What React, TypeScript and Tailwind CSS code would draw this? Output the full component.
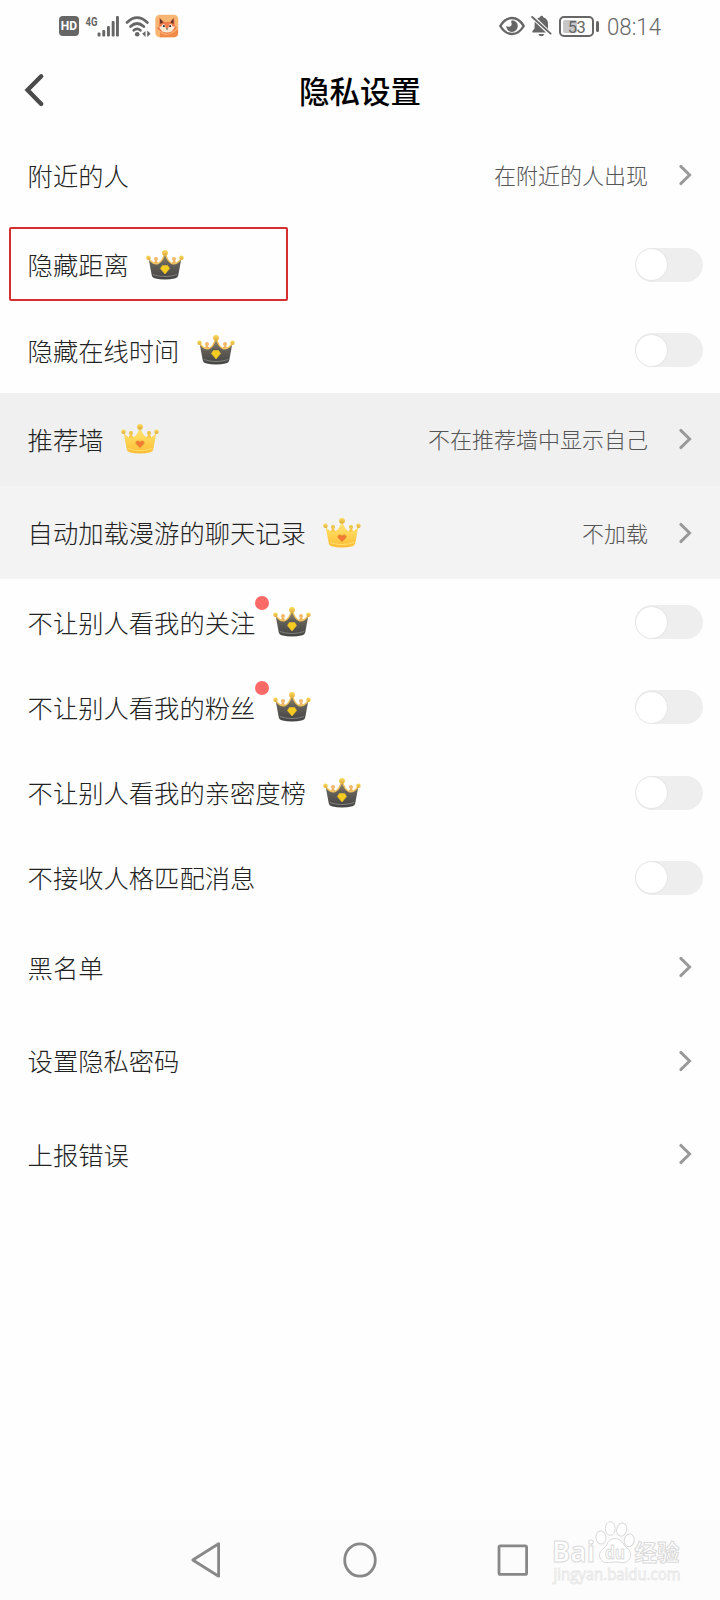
import { useId, useState } from "react";
import clsx from "clsx";

type CrownKind = "dark" | "gold";

interface RowData {
	label: string;
	kind: "toggle" | "link";
	value?: string;
	crown?: CrownKind;
	dot?: boolean;
	marked?: boolean;
	background?: string;
}

const rows: RowData[] = [
	{ label: "附近的人", kind: "link", value: "在附近的人出现" },
	{ label: "隐藏距离", kind: "toggle", crown: "dark", marked: true },
	{ label: "隐藏在线时间", kind: "toggle", crown: "dark" },
	{ label: "推荐墙", kind: "link", value: "不在推荐墙中显示自己", crown: "gold", background: "bg-[#f0f0f0]" },
	{ label: "自动加载漫游的聊天记录", kind: "link", value: "不加载", crown: "gold", background: "bg-[#f3f3f3]" },
	{ label: "不让别人看我的关注", kind: "toggle", crown: "dark", dot: true },
	{ label: "不让别人看我的粉丝", kind: "toggle", crown: "dark", dot: true },
	{ label: "不让别人看我的亲密度榜", kind: "toggle", crown: "dark" },
	{ label: "不接收人格匹配消息", kind: "toggle" },
	{ label: "黑名单", kind: "link" },
	{ label: "设置隐私密码", kind: "link" },
	{ label: "上报错误", kind: "link" },
];

function Crown({ kind }: { kind: CrownKind }) {
	const id = useId();
	const dark = kind === "dark";

	return (
		<svg width="38" height="32" viewBox="0 0 38 32" className="shrink-0">
			<defs>
				<linearGradient id={id + "body"} x1="0" y1="0" x2="0" y2="1">
					<stop offset="0" stopColor={dark ? "#a8946a" : "#ffe27a"} />
					<stop offset="0.4" stopColor={dark ? "#66625b" : "#ffd95c"} />
					<stop offset="1" stopColor={dark ? "#444444" : "#fdbc33"} />
				</linearGradient>
				<linearGradient id={id + "gold"} x1="0" y1="0" x2="0" y2="1">
					<stop offset="0" stopColor="#fbdc5c" />
					<stop offset="1" stopColor="#dfac38" />
				</linearGradient>
			</defs>
			{/* back points */}
			<path
				d="M6 19 L9.5 10 L15 18 Z M32 19 L28.5 10 L23 18 Z"
				fill={dark ? "#f0b468" : "#f9c84a"}
			/>
			<circle cx="10" cy="10" r="2" fill={dark ? "#f3b969" : "#edc548"} />
			<circle cx="28" cy="10" r="2" fill={dark ? "#f3b969" : "#edc548"} />
			<path
				d="M2.6 9.5 Q7 15.6 11.5 14.8 Q16.5 13 19 3.5 Q21.5 13 26.5 14.8 Q31 15.6 35.4 9.5 L32.2 26.5 Q31.8 28.6 29.5 29.2 Q19 32 8.5 29.2 Q6.2 28.6 5.8 26.5 Z"
				fill={`url(#${id}body)`}
			/>
			{dark && (
				<path
					d="M2.6 9.5 Q7 15.6 11.5 14.8 Q16.5 13 19 3.5 Q21.5 13 26.5 14.8 Q31 15.6 35.4 9.5"
					fill="none"
					stroke="#efc45c"
					strokeWidth="1.3"
				/>
			)}
			<path
				d="M6.8 25.5 Q19 29.6 31.2 25.5"
				fill="none"
				stroke={dark ? "#808080" : "#ffdf72"}
				strokeWidth="1"
			/>
			<circle cx="19" cy="3.8" r="2.9" fill={`url(#${id}gold)`} />
			<circle cx="2.5" cy="8.8" r="2.2" fill={`url(#${id}gold)`} />
			<circle cx="35.5" cy="8.8" r="2.2" fill={`url(#${id}gold)`} />
			{dark ? (
				<path d="M16.4 16.5 H21.6 L23.6 19.6 L19 25 L14.4 19.6 Z" fill="#f8cb20" stroke="#f8cb20" strokeWidth="0.5" strokeLinejoin="round" />
			) : (
				<path
					d="M19 25 L15 21 Q13.8 18.7 16.2 17.8 Q18 17.4 19 18.7 Q20 17.4 21.8 17.8 Q24.2 18.7 23 21 Z"
					fill="#f17a35"
					stroke="#e3ad34"
					strokeWidth="0.6"
				/>
			)}
		</svg>
	);
}

function Chevron() {
	return (
		<svg width="14" height="22" viewBox="0 0 14 22" className="shrink-0">
			<path d="M2.8 2.4 L11.6 11 L2.8 19.6" fill="none" stroke="#999" strokeWidth="2.9" strokeLinecap="round" />
		</svg>
	);
}

function Toggle() {
	const [on, setOn] = useState(false);

	return (
		<button
			role="switch"
			aria-checked={on}
			onClick={() => setOn(!on)}
			className={clsx(
				"flex h-[34px] w-[68px] shrink-0 items-center rounded-full p-[1.5px]",
				on ? "justify-end bg-amber-300" : "justify-start bg-[#eeeeee]",
			)}
		>
			<span className="size-[31px] rounded-full bg-white shadow-[0_0_2px_rgba(0,0,0,0.12)]" />
		</button>
	);
}

function SettingRow({ row }: { row: RowData }) {
	return (
		<li
			className={clsx(
				"relative flex items-center justify-between pl-[27.6px]",
				row.kind === "toggle" ? "h-[85.3px] pr-[17.5px]" : "h-[93.4px] pr-7",
				row.background,
			)}
		>
			{row.marked && (
				<div className="absolute top-[5px] left-[9px] h-[74px] w-[279px] rounded-[2px] border-2 border-[#d3302f]" />
			)}
			<div className="flex items-center gap-[17.6px]">
				<span className="relative pb-[1px] text-[25.3px] leading-8 text-[#222]">
					{row.label}
					{row.dot && <i className="absolute -top-[10px] -right-[14px] size-[14px] rounded-full bg-[#fb6a66]" />}
				</span>
				{row.crown && <Crown kind={row.crown} />}
			</div>
			{row.kind === "toggle" ? (
				<Toggle />
			) : (
				<div className="flex items-center gap-[30px]">
					{row.value && <span className="pb-[2px] text-[22px] leading-8 text-[#555]">{row.value}</span>}
					<Chevron />
				</div>
			)}
		</li>
	);
}

function StatusBar() {
	return (
		<div className="flex h-[52px] items-center justify-between pr-[59px] pl-[59px] text-[#666]">
			<div className="flex items-center">
				<div className="grid h-5 w-5 place-items-center rounded-[4px] bg-[#666] font-[Roboto] text-[12px] font-bold text-white">
					HD
				</div>
				<svg width="34" height="24" viewBox="0 0 34 24" className="ml-[6px]" fill="currentColor">
					<text x="0.5" y="11.5" fontFamily="Roboto" fontSize="13" fontWeight="700" textLength="12" lengthAdjust="spacingAndGlyphs">
						4G
					</text>
					<rect x="12.6" y="18.5" width="2.9" height="4" rx="1" />
					<rect x="17.3" y="16" width="2.9" height="6.5" rx="1" />
					<rect x="22" y="12" width="2.9" height="10.5" rx="1" />
					<rect x="26.7" y="7" width="2.9" height="15.5" rx="1" />
					<rect x="31" y="2" width="2.9" height="20.5" rx="1" />
				</svg>
				<svg width="26" height="24" viewBox="0 0 26 24" className="ml-[6px]">
					<g fill="none" stroke="currentColor" strokeWidth="2.7" strokeLinecap="round">
						<path d="M2 8.5 Q12 -1.3 22.3 8.5" />
						<path d="M5.5 12.5 Q12 6.5 18.8 12.5" />
						<path d="M8.8 16.3 Q12 13.5 15.4 16.3" />
					</g>
					<circle cx="12.2" cy="20.3" r="2.3" fill="currentColor" />
					<path d="M20.5 17 V23 L17.2 19.7 Z M22.2 16.5 V23 L25.6 19.8 Z" fill="currentColor" />
				</svg>
				<svg width="24" height="24" viewBox="0 0 24 24" className="ml-[4px]">
					<rect x="0.3" y="0.7" width="23" height="22.6" rx="4.5" fill="#f8b673" />
					<path d="M5 18 Q11 25 23 15 V19 Q23 23.3 18.5 23.3 H5 Z" fill="#f28a48" />
					<path d="M4.2 3.5 L9.2 8.1 H14.8 L19 3.5 L20 12 L22 14 L17.5 17.8 Q12 21.5 6.5 17.8 L2 14.5 L4.2 12 Z" fill="#ef7b48" />
					<path d="M4.9 4.6 L8.4 8.2 L5.2 10 Z M18.4 4.6 L15.4 8.2 L18.6 10 Z" fill="#5b3529" />
					<path d="M4 13 Q8 11 12 14.5 Q16 11 20 13 L17 17.2 Q12 20 7 17.2 Z" fill="#ffe9d2" />
					<circle cx="8.5" cy="12" r="1.8" fill="#fff" />
					<circle cx="15.5" cy="12" r="1.8" fill="#fff" />
					<circle cx="8.8" cy="12.2" r="1.1" fill="#43332f" />
					<circle cx="15.2" cy="12.2" r="1.1" fill="#43332f" />
					<path d="M10.8 14.4 H13.2 L12 16 Z" fill="#43332f" />
				</svg>
			</div>
			<div className="flex items-center">
				<svg width="26" height="20" viewBox="0 0 26 20">
					<path d="M1.3 10 Q6 2 13 2 Q20 2 24.7 10 Q20 18 13 18 Q6 18 1.3 10 Z" fill="none" stroke="currentColor" strokeWidth="2.4" />
					<path d="M13 4.3 A5.8 5.8 0 1 1 7.2 10 Q8.5 11 10.5 10.7 Q13.7 9.8 12.2 6.3 Q11.9 5.2 13 4.3 Z" fill="currentColor" />
				</svg>
				<svg width="21" height="22" viewBox="0 0 21 22" className="ml-[6px]">
					<path
						d="M6.3 3.5 Q7.6 2.5 9 2.2 Q9.2 0.8 10.6 0.8 Q12 0.8 12.3 2.2 Q17 3.6 17 9 V13.8 L18.6 15.5 Z M3.7 6.8 L15 17.5 H1.4 V16 L3.5 13.6 Z"
						fill="currentColor"
					/>
					<path d="M7.3 19 H13.3 Q12.5 21.2 10.3 21.2 Q8.2 21.2 7.3 19 Z" fill="currentColor" />
					<path d="M1.2 2 L19.6 18.6" stroke="currentColor" strokeWidth="1.9" strokeLinecap="round" />
				</svg>
				<div className="ml-[7px] flex h-[21px] w-[35px] rounded-[5px] border-2 border-current p-[2px]">
					<div className="relative grid h-full w-full place-items-center">
						<div className="absolute inset-y-0 left-0 w-[53%] rounded-[2px] bg-[#c7c7c7]" />
						<span className="relative font-[Roboto] text-[16.5px] leading-none font-normal tracking-tight">53</span>
					</div>
				</div>
				<div className="ml-[2px] h-[11px] w-[3px] rounded-full bg-current" />
				<svg width="54" height="32" viewBox="0 0 54 32" className="ml-[8px] overflow-visible" fill="currentColor">
					<text x="0" y="25" fontFamily="Roboto" fontWeight="300" fontSize="24.5" textLength="54" lengthAdjust="spacingAndGlyphs">
						08:14
					</text>
				</svg>
			</div>
		</div>
	);
}

function Watermark() {
	return (
		<svg width="136" height="68" viewBox="0 0 136 68" className="overflow-visible" fill="#fff" stroke="#dadada" strokeWidth="1">
			<g fontWeight="700" fontFamily="'Open Sans', sans-serif">
				<text x="3" y="42" fontSize="29" textLength="43" lengthAdjust="spacingAndGlyphs">
					Bai
				</text>
				<path d="M66 18.5 Q71.5 18.5 74.5 24 Q76.5 27 80 30 Q83 33.5 81 38 Q78.5 43.5 72.5 42.5 Q66 41.3 59.5 42.5 Q53.5 43.5 51 38 Q49 33.5 53.5 29.5 Q56.5 27 58 24 Q60.5 18.5 66 18.5 Z" />
				<ellipse cx="52" cy="17.5" rx="5" ry="6.5" transform="rotate(-8 52 17.5)" />
				<ellipse cx="61.3" cy="8.5" rx="4.9" ry="6.8" />
				<ellipse cx="72.7" cy="9.6" rx="5" ry="6.6" transform="rotate(12 72.7 9.6)" />
				<ellipse cx="80.2" cy="20.3" rx="5" ry="6.3" transform="rotate(10 80.2 20.3)" />
				<text x="56" y="38.5" fontSize="18" textLength="20" lengthAdjust="spacingAndGlyphs">
					du
				</text>
				<text x="85.5" y="40.5" fontSize="22.5" fontFamily="'Noto Sans CJK SC', sans-serif">
					经验
				</text>
			</g>
			<text
				x="4.5"
				y="60"
				fontSize="16"
				fontWeight="400"
				stroke="#e6e6e6"
				strokeWidth="0.8"
				fontFamily="'Open Sans', sans-serif"
				textLength="127"
				lengthAdjust="spacingAndGlyphs"
			>
				jingyan.baidu.com
			</text>
		</svg>
	);
}

function NavBar() {
	return (
		<nav className="relative flex h-[80px] items-center justify-between bg-[#fcfcfc] pr-[191px] pb-[1px] pl-[190px]">
			<svg width="32" height="38" viewBox="0 0 32 38" fill="none" stroke="#888" strokeWidth="2.8" strokeLinejoin="round">
				<path d="M28.6 2.8 V35.2 L2.8 19 Z" />
			</svg>
			<svg width="36" height="38" viewBox="0 0 36 38" fill="none" stroke="#888" strokeWidth="2.8">
				<ellipse cx="18" cy="19" rx="15.3" ry="16.2" />
			</svg>
			<svg width="32" height="38" viewBox="0 0 32 38" fill="none" stroke="#888" strokeWidth="2.8">
				<rect x="2" y="4.8" width="27.6" height="28.6" rx="1.5" />
			</svg>
			<div className="absolute top-0 right-[35px]">
				<Watermark />
			</div>
		</nav>
	);
}

export default function App() {
	return (
		<div className="flex h-[1600px] w-[720px] flex-col overflow-hidden bg-[#fefefe] font-['Noto_Sans_CJK_SC',sans-serif] font-light">
			<StatusBar />
			<header className="grid h-[76.7px] grid-cols-[1fr_auto_1fr] items-center px-6">
				<svg width="22" height="36" viewBox="0 0 22 36" fill="none" stroke="#4a4a4a" strokeWidth="4.4" strokeLinecap="round">
					<path d="M17.2 4.3 L3.6 18 L17.2 32" />
				</svg>
				<h1 className="pb-[1px] text-[30.5px] leading-10 font-medium text-black">隐私设置</h1>
			</header>
			<ul className="flex-1">
				{rows.map((row) => (
					<SettingRow key={row.label} row={row} />
				))}
			</ul>
			<NavBar />
		</div>
	);
}
